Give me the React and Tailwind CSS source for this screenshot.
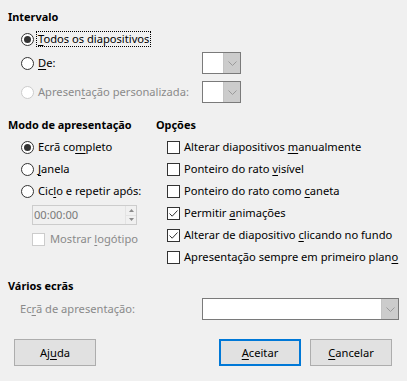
import React from 'react';

// small building blocks for the dialog
function U({ children }) {
  return <span className="underline underline-offset-2 decoration-1">{children}</span>;
}

function Radio({ checked, disabled }) {
  return (
    <span
      className={`w-[13px] h-[13px] shrink-0 rounded-full border bg-white flex items-center justify-center ${
        disabled ? 'border-[#cccccc]' : 'border-[#333333]'
      }`}
    >
      {checked && <span className="w-[7px] h-[7px] rounded-full bg-[#333333]" />}
    </span>
  );
}

function Check({ checked, disabled }) {
  return (
    <span
      className={`w-[13px] h-[13px] shrink-0 border bg-white flex items-center justify-center ${
        disabled ? 'border-[#cccccc]' : 'border-[#333333]'
      }`}
    >
      {checked && (
        <svg width="11" height="11" viewBox="0 0 11 11">
          <path d="M1.5 5.5 L4.2 8.2 L9.5 2.5" fill="none" stroke="#333333" strokeWidth="1" />
        </svg>
      )}
    </span>
  );
}

function Chevron() {
  return (
    <svg width="9" height="5" viewBox="0 0 9 5">
      <path d="M0.5 0.5 L4.5 4.5 L8.5 0.5" fill="none" stroke="#9a9a9a" strokeWidth="1" />
    </svg>
  );
}

function Combo({ wide }) {
  return (
    <div
      className={`h-[22px] border border-[#7a7a7a] bg-white flex justify-end ${
        wide ? 'w-[197px]' : 'w-[39px]'
      }`}
    >
      <div className="w-[17px] h-full bg-[#cccccc] border-l border-[#c4c4c4] flex items-center justify-center">
        <Chevron />
      </div>
    </div>
  );
}

function Button({ children, primary }) {
  return (
    <div
      className={`w-[82px] h-[27px] bg-[#e1e1e1] flex items-center justify-center ${
        primary ? 'border-2 border-[#0078d7]' : 'border border-[#adadad]'
      }`}
    >
      {children}
    </div>
  );
}

const options = [
  { label: <>Alterar diapositivos <U>m</U>anualmente</>, checked: false },
  { label: <>Ponteiro do rato <U>v</U>isível</>, checked: false },
  { label: <>Ponteiro do rato como <U>c</U>aneta</>, checked: false },
  { label: <>Permitir <U>a</U>nimações</>, checked: true },
  { label: <>Alterar de diapositivo <U>c</U>licando no fundo</>, checked: true },
  { label: <>Apresentação sempre em primeiro plan<U>o</U></>, checked: false },
];

export default function App() {
  return (
    <div className="w-[407px] h-[381px] overflow-hidden bg-[#f0f0f0] text-black text-[11.15px] leading-none font-['Noto_Sans',sans-serif]">
      <div className="pt-[6px] pl-[8px]">
        {/* Intervalo */}
        <div className="h-[22px] flex items-center font-bold text-[10.9px]">Intervalo</div>
        <div className="pl-[13px]">
          <div className="h-[22px] flex items-center gap-[2px]">
            <Radio checked />
            <span className="border border-dotted border-black px-[1px] py-[1px]">
              <U>T</U>odos os diapositivos
            </span>
          </div>
          <div className="mt-[2px] h-[22px] grid grid-cols-[181px_39px] items-center">
            <div className="flex items-center gap-[4px]">
              <Radio />
              <span><U>D</U>e:</span>
            </div>
            <Combo />
          </div>
          <div className="mt-[7px] h-[22px] grid grid-cols-[181px_39px] items-center">
            <div className="flex items-center gap-[4px] text-[#8a8a8a]">
              <Radio disabled />
              <span>Apresen<U>t</U>ação personalizada:</span>
            </div>
            <Combo />
          </div>
        </div>

        {/* Modo de apresentação / Opções */}
        <div className="mt-[11px] grid grid-cols-[147px_1fr]">
          <div>
            <div className="h-[22px] flex items-center font-bold text-[10.9px]">Modo de apresentação</div>
            <div className="pl-[13px]">
              <div className="h-[22px] flex items-center gap-[4px]">
                <Radio checked />
                <span>Ecrã co<U>m</U>pleto</span>
              </div>
              <div className="h-[22px] flex items-center gap-[4px]">
                <Radio />
                <span><U>J</U>anela</span>
              </div>
              <div className="h-[22px] flex items-center gap-[4px]">
                <Radio />
                <span>Cic<U>l</U>o e repetir após:</span>
              </div>
            </div>
            <div className="pl-[24px]">
              <div className="mt-[3px] w-[105px] h-[20px] border border-[#cccccc] bg-[#f0f0f0] flex items-center justify-between">
                <span className="pl-[1px] text-[#7a7a7a]">00:00:00</span>
                <div className="w-[11px] h-full border-l border-[#e3e3e3] flex flex-col">
                  <div className="flex-1 flex items-center justify-center border-b border-[#e3e3e3]">
                    <svg width="5" height="3" viewBox="0 0 5 3"><path d="M2.5 0 L5 3 L0 3 Z" fill="#8a8a8a" /></svg>
                  </div>
                  <div className="flex-1 flex items-center justify-center">
                    <svg width="5" height="3" viewBox="0 0 5 3"><path d="M0 0 L5 0 L2.5 3 Z" fill="#8a8a8a" /></svg>
                  </div>
                </div>
              </div>
              <div className="mt-[3px] h-[22px] flex items-center gap-[5px] text-[#8a8a8a]">
                <Check disabled />
                <span>Mostrar <U>l</U>ogótipo</span>
              </div>
            </div>
          </div>

          <div>
            <div className="h-[22px] flex items-center font-bold text-[10.9px] pl-[1px]">Opções</div>
            <div className="pl-[12px]">
              {options.map((o, i) => (
                <div key={i} className="h-[22px] flex items-center gap-[4px]">
                  <Check checked={o.checked} />
                  <span>{o.label}</span>
                </div>
              ))}
            </div>
          </div>
        </div>

        {/* Vários ecrãs */}
        <div className="mt-[7px] h-[22px] flex items-center font-bold text-[10.9px]">Vários ecrãs</div>
        <div className="mt-[1px] pl-[12px] h-[22px] grid grid-cols-[182px_197px] items-center">
          <span className="text-[#8a8a8a]">Ec<U>r</U>ã de apresentação:</span>
          <Combo wide />
        </div>
      </div>

      {/* botões */}
      <div className="mt-[19px] pl-[14px] flex">
        <Button>Aj<U>u</U>da</Button>
        <div className="ml-[123px] flex gap-[9px]">
          <Button primary><U>A</U>ceitar</Button>
          <Button><U>C</U>ancelar</Button>
        </div>
      </div>
    </div>
  );
}
